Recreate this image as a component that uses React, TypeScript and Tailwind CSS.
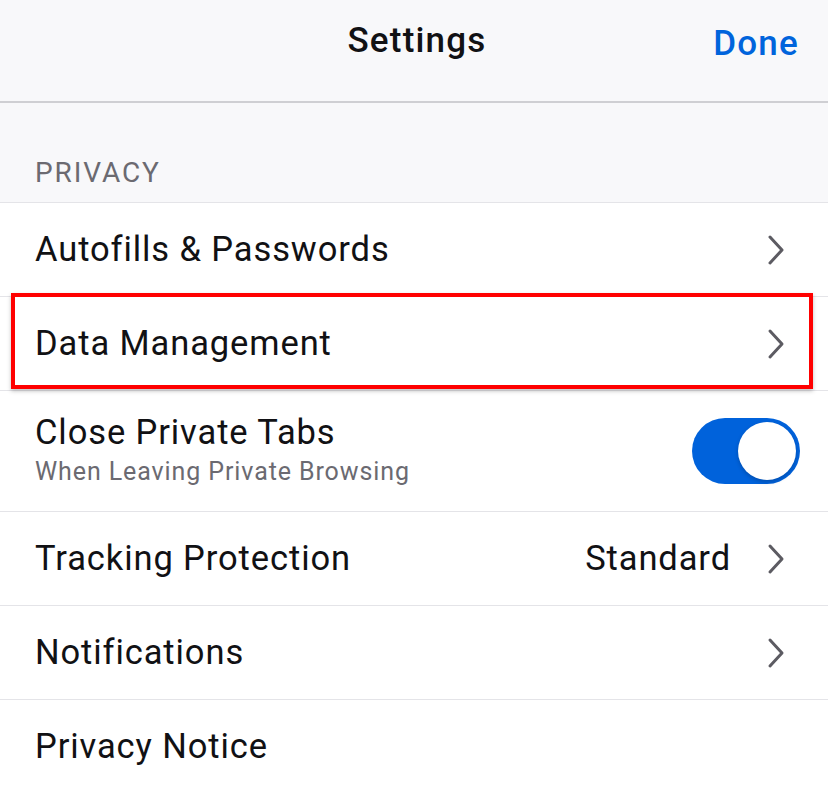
import React, { useState } from 'react';

const font = { fontFamily: '"Roboto", "Liberation Sans", sans-serif' };

const Chevron: React.FC = () => (
  <svg width="20" height="32" viewBox="0 0 20 32" className="shrink-0">
    <path d="M4 3 L16 16 L4 29" fill="none" stroke="#5c5b62" strokeWidth="3" strokeLinecap="round" strokeLinejoin="round" />
  </svg>
);

const Row: React.FC<{ children: React.ReactNode; className?: string }> = ({ children, className }) => (
  <div className={`flex items-center justify-between pl-[35px] pr-[42px] border-b border-[#e4e4e8] bg-white ${className ?? 'h-[94px]'}`}>
    {children}
  </div>
);

const Label: React.FC<{ children: React.ReactNode }> = ({ children }) => (
  <span className="text-[34.5px] tracking-[0.9px]">{children}</span>
);

const App: React.FC = () => {
  const [closeTabs, setCloseTabs] = useState(true);

  return (
    <div className="w-[828px] h-[789px] overflow-hidden bg-white text-[#111114]" style={font}>
      {/* nav bar */}
      <div className="relative h-[103px] bg-[#f8f8fa] border-b-2 border-[#cfcfd3] flex items-center justify-center">
        <span className="text-[35px] font-medium -mt-[18px] pl-[6px] tracking-[1.2px]">Settings</span>
        <button className="absolute right-[29px] top-[18px] text-[35px] font-medium tracking-[1.2px] text-[#0064dc]">Done</button>
      </div>

      <div className="h-[100px] bg-[#f8f8fa] border-b border-[#e4e4e8] flex items-end pl-[35px] pb-[8px]">
        <span className="text-[28px] text-[#6b6a71] tracking-[1.9px]">PRIVACY</span>
      </div>

      <Row>
        <Label>Autofills &amp; Passwords</Label>
        <Chevron />
      </Row>

      <div className="relative">
        <Row>
          <Label>Data Management</Label>
          <Chevron />
        </Row>
        <div className="absolute left-[11px] right-[15px] -top-[4px] h-[96px] border-[4px] border-[#ff0000] shadow-[0_2px_4px_rgba(0,0,0,0.25)] pointer-events-none" />
      </div>

      <Row className="h-[121px]">
        <div className="flex flex-col mt-[2px]">
          <span className="text-[34.5px] tracking-[0.9px] leading-[40px]">Close Private Tabs</span>
          <span className="text-[25px] leading-[40px] text-[#6b6a71] tracking-[0.9px]">When Leaving Private Browsing</span>
        </div>
        <button
          onClick={() => setCloseTabs(!closeTabs)}
          className={`relative w-[108px] h-[66px] -mr-[14px] rounded-full ${closeTabs ? 'bg-[#0062db]' : 'bg-[#e5e5ea]'}`}
        >
          <span
            className={`absolute top-[4px] w-[58px] h-[58px] rounded-full bg-white shadow-[0_2px_4px_rgba(0,0,0,0.2)] ${closeTabs ? 'left-[46px]' : 'left-[4px]'}`}
          />
        </button>
      </Row>

      <Row>
        <Label>Tracking Protection</Label>
        <div className="flex items-center gap-[35px]">
          <Label>Standard</Label>
          <Chevron />
        </div>
      </Row>

      <Row>
        <Label>Notifications</Label>
        <Chevron />
      </Row>

      <Row>
        <Label>Privacy Notice</Label>
      </Row>
    </div>
  );
};

export default App;
